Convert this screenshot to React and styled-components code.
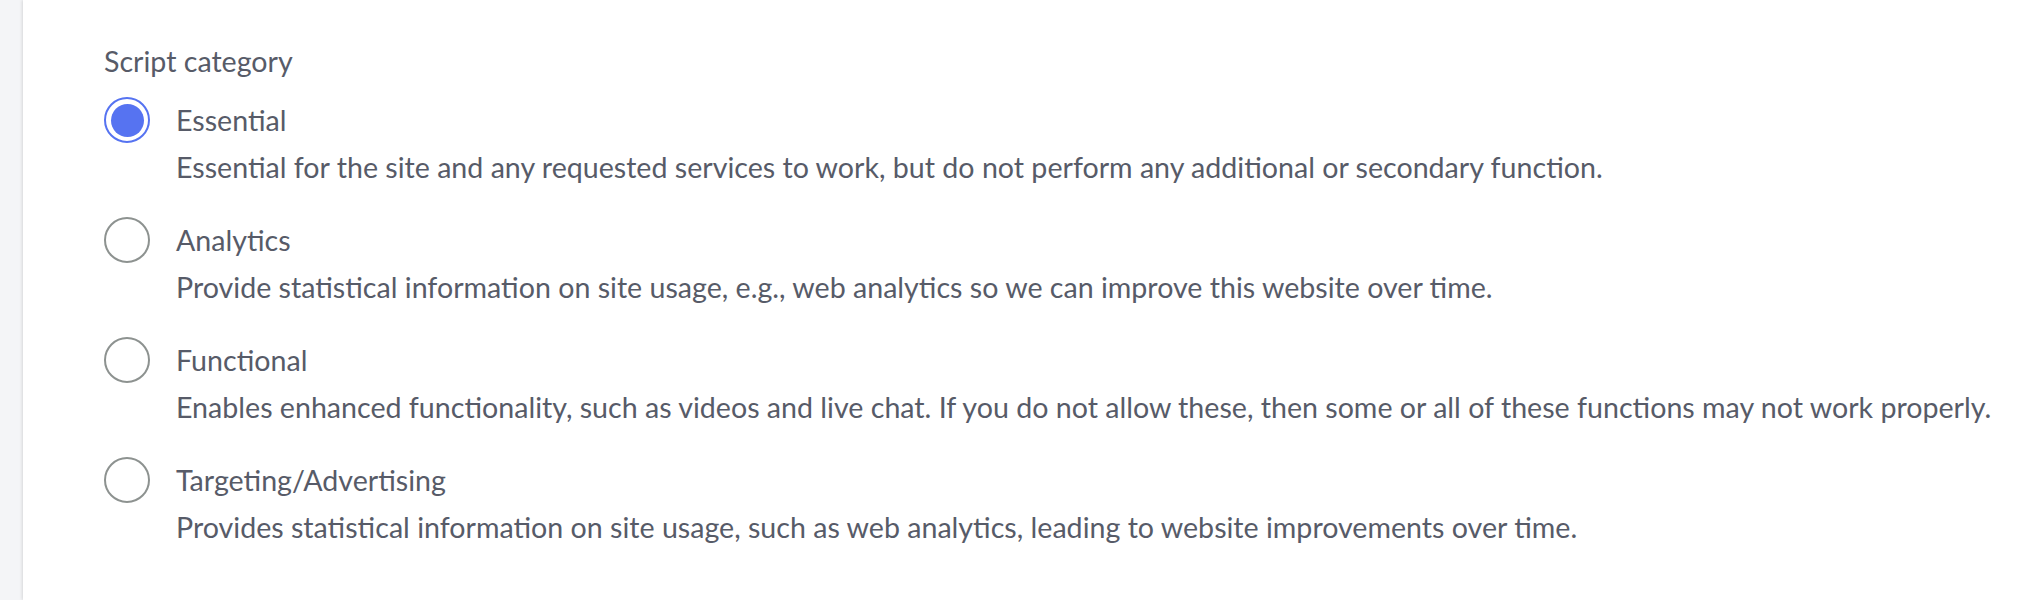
import React, { useState } from "react";
import styled, { createGlobalStyle } from "styled-components";

const options = [
  {
    id: "essential",
    label: "Essential",
    description:
      "Essential for the site and any requested services to work, but do not perform any additional or secondary function.",
  },
  {
    id: "analytics",
    label: "Analytics",
    description:
      "Provide statistical information on site usage, e.g., web analytics so we can improve this website over time.",
  },
  {
    id: "functional",
    label: "Functional",
    description:
      "Enables enhanced functionality, such as videos and live chat. If you do not allow these, then some or all of these functions may not work properly.",
  },
  {
    id: "targeting",
    label: "Targeting/Advertising",
    description:
      "Provides statistical information on site usage, such as web analytics, leading to website improvements over time.",
  },
];

const ScriptCategory = () => {
  const [selected, setSelected] = useState("essential");

  return (
    <>
      <GlobalStyle />
      <Page>
        <Panel>
          <Fieldset>
            <Legend>Script category</Legend>
            {options.map((opt) => (
              <Option key={opt.id}>
                <Radio
                  type="radio"
                  name="script-category"
                  id={opt.id}
                  checked={selected === opt.id}
                  onChange={() => setSelected(opt.id)}
                />
                <Label htmlFor={opt.id}>{opt.label}</Label>
                <Description>{opt.description}</Description>
              </Option>
            ))}
          </Fieldset>
        </Panel>
      </Page>
    </>
  );
};

const GlobalStyle = createGlobalStyle`
  html, body {
    margin: 0;
    padding: 0;
    background: #f4f5f7;
  }

  body {
    font-family: Lato, "Open Sans", sans-serif;
  }
`;

const Page = styled.div`
  min-height: 600px;
  display: flex;
  padding-left: 23px;
`;

const Panel = styled.main`
  flex: 1;
  background: #ffffff;
  box-shadow: -1px 0 3px rgba(0, 0, 0, 0.12);
  padding: 43px 0 0 81px;
`;

const Fieldset = styled.fieldset`
  border: none;
  margin: 0;
  padding: 0;
  display: flex;
  flex-direction: column;
  gap: 32px;
  color: #575b68;
  font-size: 28.6px;
  line-height: 36px;
`;

const Legend = styled.legend`
  padding: 0;
  margin-bottom: -14px;
  float: left;
`;

const Option = styled.div`
  display: grid;
  grid-template-columns: 46px 1fr;
  column-gap: 26px;
  row-gap: 6px;
  align-items: center;
`;

const Radio = styled.input`
  appearance: none;
  margin: 0;
  width: 46px;
  height: 46px;
  border-radius: 50%;
  border: 2px solid #8d9290;
  background: #ffffff;
  display: grid;
  place-items: center;
  cursor: pointer;

  &::after {
    content: "";
    width: 33px;
    height: 33px;
    border-radius: 50%;
    background: transparent;
  }

  &:checked {
    border-color: #5673f1;
  }

  &:checked::after {
    background: #5673f1;
  }
`;

const Label = styled.label`
  cursor: pointer;
`;

const Description = styled.p`
  grid-column: 2;
  margin: 0;
  white-space: nowrap;
`;

export default ScriptCategory;
